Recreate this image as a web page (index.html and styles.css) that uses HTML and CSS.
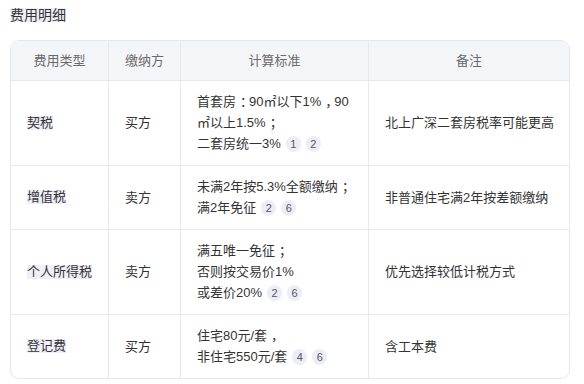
FILE: index.html
```html
<!DOCTYPE html>
<html lang="zh-CN">
<head>
<meta charset="utf-8">
<link rel="stylesheet" href="styles.css">
</head>
<body>
<div class="page">
  <h2 class="title"><span class="hl">费用明细</span></h2>
  <div class="table">
    <div class="cell head">费用类型</div>
    <div class="cell head">缴纳方</div>
    <div class="cell head">计算标准</div>
    <div class="cell head last">备注</div>

    <div class="cell"><span class="hl">契税</span></div>
    <div class="cell">买方</div>
    <div class="cell multi">首套房<span class="p">：</span>90㎡以下1%<span class="p">，</span>90<br>㎡以上1.5%<span class="p">；</span><br>二套房统一3%<span class="badge">1</span><span class="badge">2</span></div>
    <div class="cell last">北上广深二套房税率可能更高</div>

    <div class="cell"><span class="hl">增值税</span></div>
    <div class="cell">卖方</div>
    <div class="cell multi">未满2年按5.3%全额缴纳<span class="p">；</span><br>满2年免征<span class="badge">2</span><span class="badge">6</span></div>
    <div class="cell last">非普通住宅满2年按差额缴纳</div>

    <div class="cell"><span class="hl">个人所得税</span></div>
    <div class="cell">卖方</div>
    <div class="cell multi">满五唯一免征<span class="p">；</span><br>否则按交易价1%<br>或差价20%<span class="badge">2</span><span class="badge">6</span></div>
    <div class="cell last">优先选择较低计税方式</div>

    <div class="cell bottom"><span class="hl">登记费</span></div>
    <div class="cell bottom">买方</div>
    <div class="cell bottom multi">住宅80元/套<span class="p">，</span><br>非住宅550元/套<span class="badge">4</span><span class="badge">6</span></div>
    <div class="cell bottom last">含工本费</div>
  </div>
</div>
</body>
</html>
```

FILE: styles.css
```css
* { box-sizing: border-box; }
html, body {
  margin: 0;
  padding: 0;
  background: #ffffff;
}
body {
  font-family: "Liberation Sans", "Noto Sans CJK SC", sans-serif;
  color: #333333;
  font-size: 13px;
}
.page {
  padding: 7px 10px 0 10px;
}
.title {
  margin: 0 0 17px 0;
  font-size: 14px;
  font-weight: normal;
  line-height: 16px;
  color: #333333;
}
.hl {
  display: inline-block;
  line-height: 14px;
  background: #efeef9;
}
.p {
  display: inline-block;
  line-height: 13px;
  padding-left: 4px;
  letter-spacing: -4px;
}
.table {
  width: 560px;
  border: 1px solid #e6e7ea;
  border-radius: 9px;
  overflow: hidden;
  display: grid;
  grid-template-columns: 98px 72px 188px 200px;
}
.cell {
  display: flex;
  align-items: center;
  padding: 10px 16px 11px 16px;
  line-height: 21px;
  border-right: 1px solid #e8e8ea;
  border-bottom: 1px solid #e8e8ea;
  white-space: nowrap;
}
.cell.multi {
  display: block;
  align-self: stretch;
}
.cell.last { border-right: none; }
.cell.bottom { border-bottom: none; }
.head {
  height: 40px;
  padding: 0 8px;
  justify-content: center;
  background: #f4f5f8;
  color: #6b6b6b;
}
.badge {
  display: inline-block;
  width: 15px;
  height: 16px;
  line-height: 16px;
  margin-left: 5px;
  border-radius: 8px;
  background: #ededf8;
  color: #555555;
  font-size: 11px;
  text-align: center;
  vertical-align: 0px;
}
```
